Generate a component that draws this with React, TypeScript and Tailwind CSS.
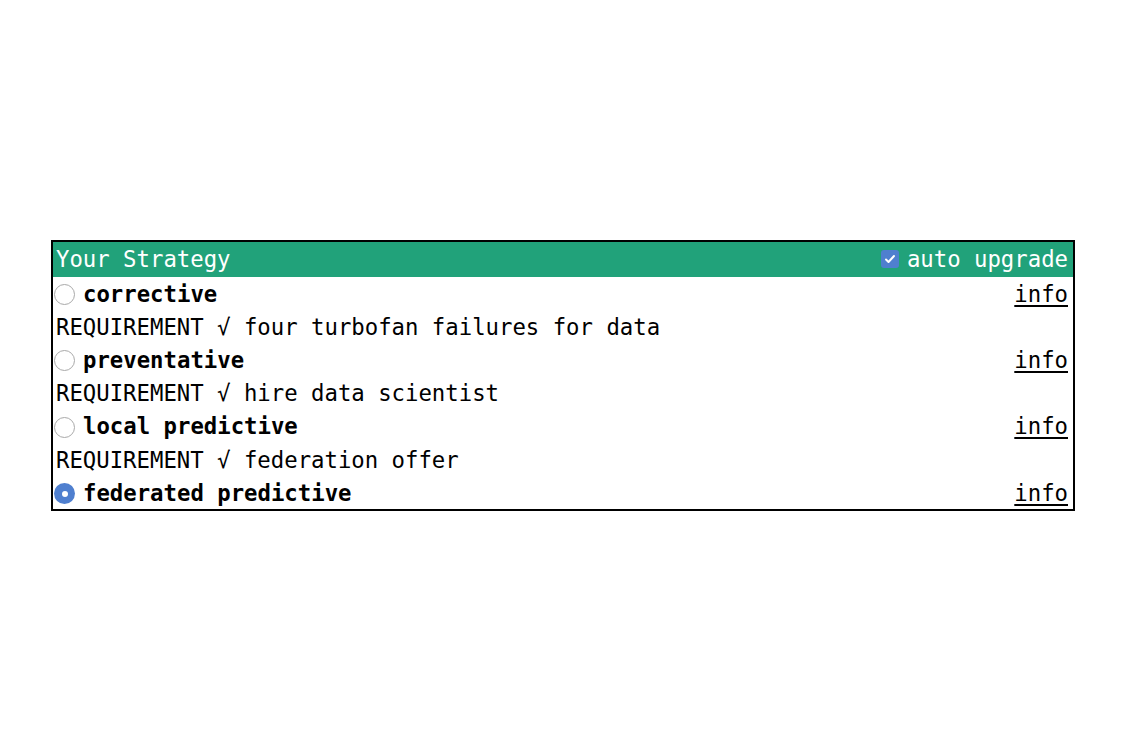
import React, { useState } from "react";

type Strategy = {
  id: string;
  label: string;
  requirement?: string;
};

const strategies: Strategy[] = [
  { id: "corrective", label: "corrective", requirement: "four turbofan failures for data" },
  { id: "preventative", label: "preventative", requirement: "hire data scientist" },
  { id: "local", label: "local predictive", requirement: "federation offer" },
  { id: "federated", label: "federated predictive" },
];

function Radio({ checked }: { checked: boolean }) {
  if (checked) {
    return (
      <span className="w-[21px] h-[21px] rounded-full bg-[#4f7fcf] flex items-center justify-center shrink-0">
        <span className="w-[6px] h-[6px] rounded-full bg-white" />
      </span>
    );
  }
  return (
    <span className="w-[21px] h-[21px] rounded-full border-[1.5px] border-[#a9a9a9] bg-white shrink-0" />
  );
}

export default function App() {
  const [selected, setSelected] = useState("federated");
  const [autoUpgrade, setAutoUpgrade] = useState(true);

  return (
    <div
      className="h-screen w-full flex items-center justify-center bg-white text-black"
      style={{ fontFamily: '"DejaVu Sans Mono", "Liberation Mono", monospace' }}
    >
      <div className="w-[1024px] border-2 border-black text-[22.3px]">
        {/* Header */}
        <div className="h-[35px] bg-[#21a27a] text-white flex items-center justify-between pl-[3px] pr-[5px]">
          <span>Your Strategy</span>
          <label
            className="flex items-center gap-[8px] cursor-pointer"
            onClick={() => setAutoUpgrade(!autoUpgrade)}
          >
            <span className="w-[18px] h-[18px] rounded-[3px] bg-[#4f7fcf] flex items-center justify-center">
              {autoUpgrade && (
                <svg width="12" height="12" viewBox="0 0 12 12" fill="none">
                  <path d="M2 6.5l2.5 2.5L10 3" stroke="white" strokeWidth="2" strokeLinecap="round" strokeLinejoin="round" />
                </svg>
              )}
            </span>
            <span>auto upgrade</span>
          </label>
        </div>

        {/* Options */}
        {strategies.map((s) => (
          <div key={s.id}>
            <div
              className="h-[33.2px] pt-[2px] flex items-center justify-between pl-[1px] pr-[5px] cursor-pointer"
              onClick={() => setSelected(s.id)}
            >
              <div className="flex items-center gap-[8px]">
                <Radio checked={selected === s.id} />
                <span className="font-bold">{s.label}</span>
              </div>
              <a className="underline underline-offset-[3px] cursor-pointer">info</a>
            </div>
            {s.requirement && (
              <div className="h-[33.2px] pt-[2px] flex items-center pl-[3px]">
                REQUIREMENT √ {s.requirement}
              </div>
            )}
          </div>
        ))}
      </div>
    </div>
  );
}
